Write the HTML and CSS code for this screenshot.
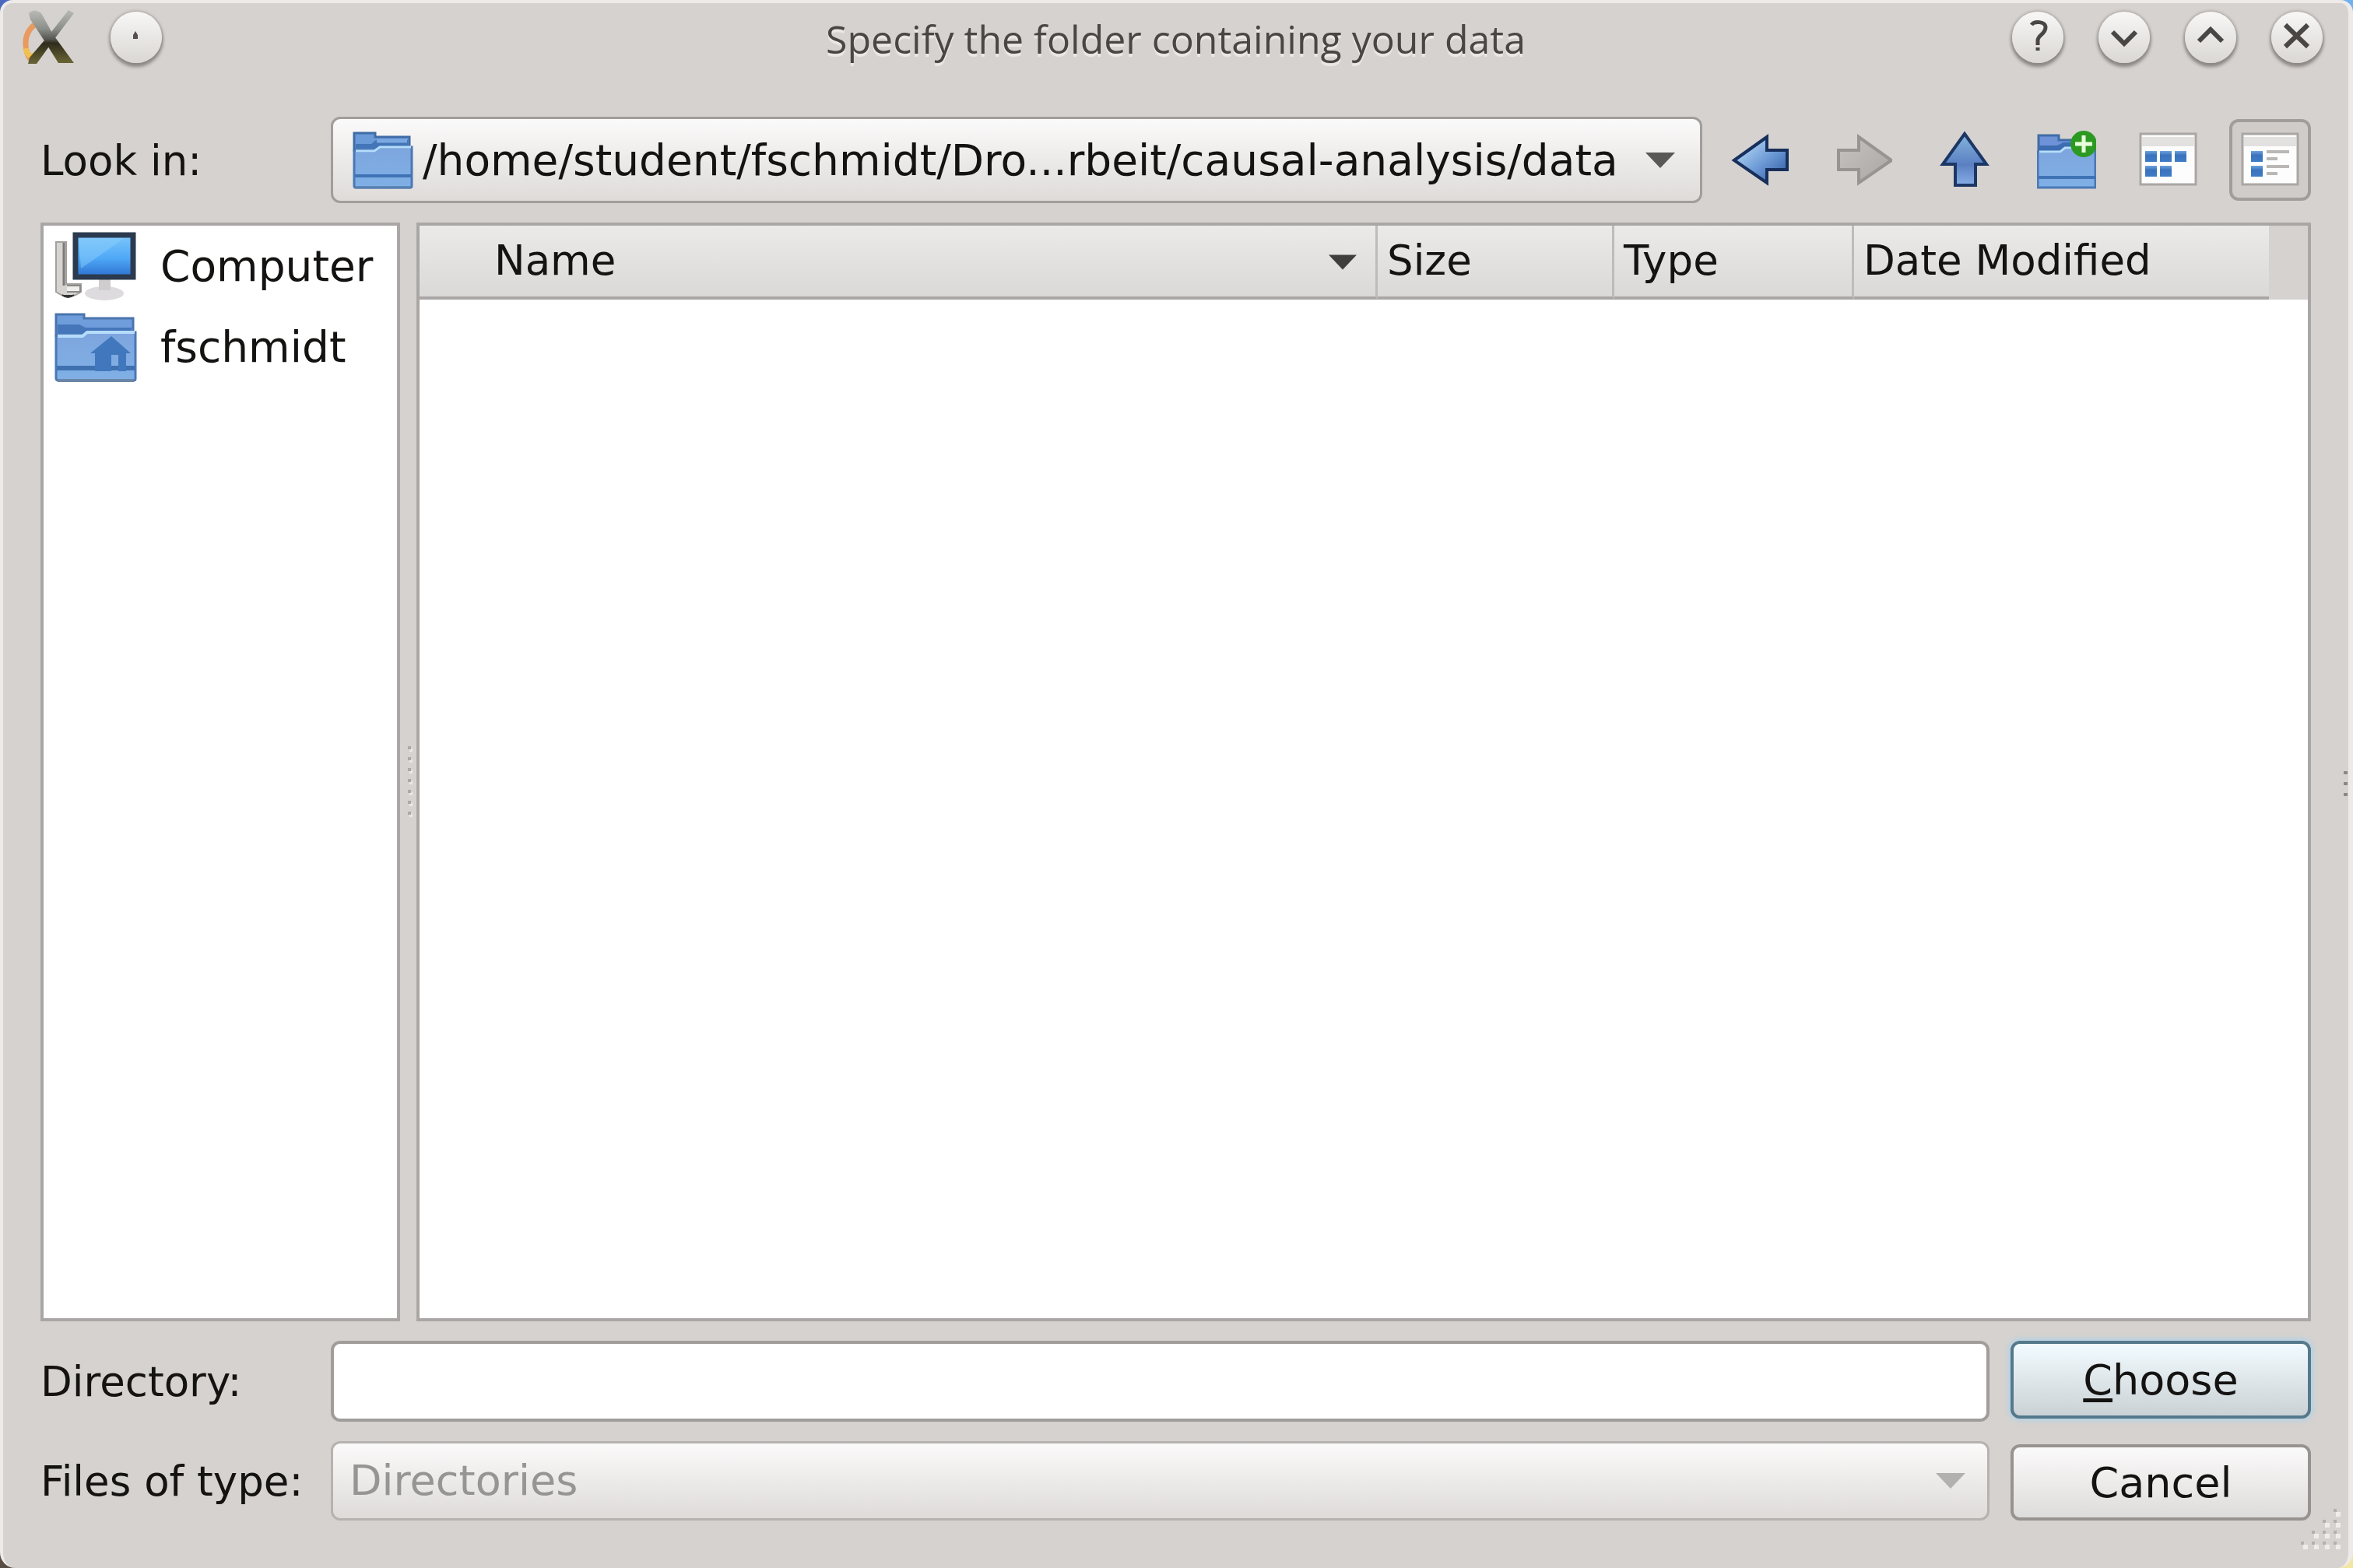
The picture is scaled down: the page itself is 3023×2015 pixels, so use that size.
FILE: index.html
```html
<!DOCTYPE html>
<html lang="en">
<head>
<meta charset="utf-8">
<title>Specify the folder containing your data</title>
<link rel="stylesheet" href="styles.css">
</head>
<body>
<svg class="defs" aria-hidden="true">
  <defs>
    <linearGradient id="blue" x1="0" y1="0" x2="0" y2="1"><stop offset="0" stop-color="#7ea5de"/><stop offset="1" stop-color="#7fb0e6"/></linearGradient>
    <linearGradient id="back" x1="0" y1="0" x2="1" y2="1"><stop offset="0.2" stop-color="#a9cdf0"/><stop offset="0.55" stop-color="#6d9ad6"/><stop offset="0.8" stop-color="#4672b4"/></linearGradient>
    <linearGradient id="fwd" x1="0" y1="0" x2="1" y2="1"><stop offset="0" stop-color="#c6c3c1"/><stop offset="1" stop-color="#a9a6a4"/></linearGradient>
    <linearGradient id="up" x1="0" y1="0" x2="0" y2="1"><stop offset="0" stop-color="#84b4dc"/><stop offset="0.6" stop-color="#5b80c2"/><stop offset="1" stop-color="#86aee6"/></linearGradient>
    <linearGradient id="screen" x1="0" y1="0" x2="0" y2="1"><stop offset="0" stop-color="#7cc6fb"/><stop offset="0.55" stop-color="#50a9f6"/><stop offset="1" stop-color="#2b6fd0"/></linearGradient>
    <linearGradient id="tile" x1="0" y1="0" x2="0" y2="1"><stop offset="0" stop-color="#6fa3dc"/><stop offset="0.4" stop-color="#3a72bd"/><stop offset="1" stop-color="#3f7cc6"/></linearGradient>
    <linearGradient id="metal" x1="0" y1="0" x2="0" y2="1"><stop offset="0" stop-color="#b9bab7"/><stop offset="0.35" stop-color="#8b8e89"/><stop offset="0.55" stop-color="#55544f"/><stop offset="0.62" stop-color="#2f2c1c"/><stop offset="1" stop-color="#6a6535"/></linearGradient>
    <symbol id="folder" viewBox="0 0 78 74">
      <path d="M2 2H29V7H73V24H2Z" fill="#6b9ad8" stroke="#3f6ca6" stroke-width="3"/>
      <path d="M4 16H24L30 11H71V22H4Z" fill="#4375b8"/>
      <path d="M31 12H70" stroke="#7ba8e0" stroke-width="5"/>
      <path d="M2 25H28L35 20H76V70Q76 72 74 72H4Q2 72 2 70Z" fill="url(#blue)" stroke="#4a78b4" stroke-width="3"/>
      <path d="M4 25H28L35 20H75" fill="none" stroke="#b5ddfb" stroke-width="3"/>
      <path d="M3 57H75" stroke="#3f73b5" stroke-width="4"/>
      <path d="M3 72H75" stroke="#5880b0" stroke-width="3"/>
    </symbol>
  </defs>
</svg>

<div class="window">
  <header class="titlebar">
    <div class="title-left">
      <svg class="app-icon" viewBox="0 0 80 80" aria-hidden="true">
        <path d="M20 24Q8 34 9 50Q10 62 15 68" fill="none" stroke="#e89a60" stroke-width="7"/>
        <path d="M9 54Q12 68 22 62" fill="none" stroke="#f0c050" stroke-width="7"/>
        <path d="M64 5L71 9L46 42L23 74H12L14 66L38 38Z" fill="url(#metal)"/>
        <path d="M13 9Q20 2 29 9L44 36L71 73H51L34 46L15 17Z" fill="url(#metal)"/>
      </svg>
      <button class="round" type="button" aria-label="On all desktops"><svg viewBox="0 0 66 66"><path d="M32 25L35 30V35H29V30Z" fill="#55504d"/></svg></button>
    </div>
    <h1 class="title">Specify the folder containing your data</h1>
    <div class="title-right">
      <button class="round" type="button" aria-label="Help"><svg viewBox="0 0 66 66"><path d="M25 17C28 12 43 12 43 20C43 29 33 30 33 37V43M33 46V50" class="glyph"/></svg></button>
      <button class="round" type="button" aria-label="Minimize"><svg viewBox="0 0 66 66"><path d="M18 26L33 41L48 26" class="glyph bold"/></svg></button>
      <button class="round" type="button" aria-label="Maximize"><svg viewBox="0 0 66 66"><path d="M18 38L33 23L48 38" class="glyph bold"/></svg></button>
      <button class="round" type="button" aria-label="Close"><svg viewBox="0 0 66 66"><path d="M18 17L47 45M47 17L18 45" class="glyph bold"/></svg></button>
    </div>
  </header>

  <main class="dialog">
    <div class="lookin">
      <label class="label" for="path">Look in:</label>
      <div class="combo path">
        <svg class="folder-icon"><use href="#folder"/></svg>
        <select id="path"><option>/home/student/fschmidt/Dro...rbeit/causal-analysis/data</option></select>
        <svg class="arrow" viewBox="0 0 38 20"><path d="M0 0H38L19 20Z"/></svg>
      </div>
      <div class="tools">
        <button class="tool" type="button" aria-label="Back"><svg viewBox="0 0 76 76"><path d="M4 38L46 8V25H72V50H46V67Z" fill="url(#back)" stroke="#172f5c" stroke-width="4"/></svg></button>
        <button class="tool" type="button" aria-label="Forward" disabled><svg viewBox="0 0 76 76"><path d="M75 38L33 8V25H7V50H33V67Z" fill="url(#fwd)" stroke="#979492" stroke-width="4"/></svg></button>
        <button class="tool" type="button" aria-label="Parent directory"><svg viewBox="0 0 76 76"><path d="M38 4L66 43H52V70H26V43H10Z" fill="url(#up)" stroke="#1c3766" stroke-width="4"/></svg></button>
        <button class="tool" type="button" aria-label="Create new folder"><svg viewBox="0 0 76 76">
          <path d="M2 6H28V12H72V26H2Z" fill="#6d92d8" stroke="#3f6ca6" stroke-width="3"/><path d="M3 19H26L34 15H72V26H3Z" fill="#3d6cb2"/>
          <path d="M1 27H30L36 22H75V73H1Z" fill="url(#blue)" stroke="#4a78b4" stroke-width="3"/><path d="M3 27H30L36 22H74" fill="none" stroke="#b5ddfb" stroke-width="3"/>
          <path d="M2 60H75" stroke="#3f73b5" stroke-width="4"/><circle cx="60" cy="17" r="17" fill="#2c9a22"/><path d="M60 6V28M49 17H71" stroke="#e9ffdc" stroke-width="5"/></svg></button>
        <button class="tool" type="button" aria-label="List view"><svg viewBox="0 0 76 76"><rect x="2" y="4" width="71" height="65" fill="#fdfdfd" stroke="#a9a6a4" stroke-width="3"/><path d="M4 8H71V20H4Z" fill="#e2e1df"/>
          <g fill="url(#tile)"><rect x="8" y="26" width="15" height="14"/><rect x="27" y="26" width="15" height="14"/><rect x="46" y="26" width="15" height="14"/><rect x="8" y="45" width="15" height="14"/><rect x="27" y="45" width="15" height="14"/></g></svg></button>
        <button class="tool pressed" type="button" aria-label="Detail view" aria-pressed="true"><svg viewBox="0 0 76 76"><rect x="2" y="4" width="71" height="65" fill="#fdfdfd" stroke="#a9a6a4" stroke-width="3"/><path d="M4 8H71V20H4Z" fill="#e2e1df"/>
          <g fill="url(#tile)"><rect x="13" y="26" width="15" height="14"/><rect x="13" y="45" width="15" height="14"/></g><path d="M33 27H62M33 36H47M33 46H62M33 55H47" stroke="#b9b8b7" stroke-width="4"/></svg></button>
      </div>
    </div>

    <div class="panes">
      <ul class="places">
        <li><a href="#computer"><svg viewBox="0 0 106 90" aria-hidden="true">
          <path d="M2 14H15V68H34V78Q18 90 2 78Z" fill="#d5d4d1" stroke="#a3a19e" stroke-width="2"/><path d="M12 15V70" stroke="#7d7b78" stroke-width="3"/><path d="M10 82Q17 88 25 82" fill="#333" stroke="#333" stroke-width="2"/><path d="M16 70H33V78H16" fill="#efeeec" stroke="#8b8986" stroke-width="2"/>
          <ellipse cx="64" cy="80" rx="25" ry="9" fill="#dddbde"/><path d="M57 60H72V76H57Z" fill="#cfcdcd"/>
          <rect x="27" y="5" width="74" height="54" fill="url(#screen)" stroke="#2b3a4e" stroke-width="7"/><path d="M31 9H90L34 48Z" fill="#8fd0fc" opacity="0.45"/></svg>Computer</a></li>
        <li><a href="#home"><svg viewBox="0 0 106 90" aria-hidden="true">
          <path d="M2 3H38V8H101V30H2Z" fill="#6f9ddb" stroke="#4a74ad" stroke-width="3"/><path d="M4 16H32L40 20H99V28H4Z" fill="#4676ba"/>
          <path d="M2 31H36L42 26H104V86Q104 88 101 88H6Q2 88 2 85Z" fill="url(#blue)" stroke="#4a78b4" stroke-width="3"/><path d="M4 31H36L42 26H103" fill="none" stroke="#b5dcfb" stroke-width="4"/>
          <path d="M3 72H103" stroke="#3f70b0" stroke-width="6"/><path d="M73 31L98 53H92V76H82V55H73V76H52V53H46Z" fill="#4178bd"/><path d="M4 88H102" stroke="#6a86a8" stroke-width="4"/></svg>fschmidt</a></li>
      </ul>
      <div class="splitter"><i></i><i></i><i></i><i></i><i></i><i></i><i></i></div>
      <div class="files">
        <table>
          <colgroup><col><col class="c-size"><col class="c-type"><col class="c-date"><col class="c-rest"></colgroup>
          <thead><tr>
            <th scope="col"><span class="sort">Name<svg viewBox="0 0 38 20"><path d="M0 0H38L19 20Z"/></svg></span></th>
            <th scope="col">Size</th><th scope="col">Type</th><th scope="col">Date Modified</th><td></td>
          </tr></thead>
        </table>
      </div>
    </div>

    <form class="form">
      <label class="label" for="dir">Directory:</label>
      <input id="dir" class="field" type="text">
      <button class="btn default" type="button"><u>C</u>hoose</button>
      <label class="label" for="type">Files of type:</label>
      <div class="combo type">
        <select id="type" disabled><option>Directories</option></select>
        <svg class="arrow" viewBox="0 0 38 20"><path d="M0 0H38L19 20Z"/></svg>
      </div>
      <button class="btn" type="button">Cancel</button>
    </form>
  </main>
  <svg class="edge-grip" viewBox="0 0 8 40" aria-hidden="true"><path d="M2 2h5v4h-5zM2 16h5v4h-5zM2 30h5v4h-5z" fill="#8b8886"/></svg>
  <svg class="size-grip" viewBox="0 0 56 56" aria-hidden="true">
    <g fill="#fff" opacity="0.6"><path d="M48 6h6v6h-6zM34 20h6v6h-6zM48 20h6v6h-6zM20 34h6v6h-6zM34 34h6v6h-6zM48 34h6v6h-6zM6 48h6v6h-6zM20 48h6v6h-6zM34 48h6v6h-6zM48 48h6v6h-6z"/></g>
    <g fill="#b3b0ae"><path d="M45 2h4v4h-4zM31 16h4v4h-4zM45 16h4v4h-4zM17 30h4v4h-4zM31 30h4v4h-4zM45 30h4v4h-4zM3 44h4v4h-4zM17 44h4v4h-4zM31 44h4v4h-4zM45 44h4v4h-4z"/></g>
  </svg>
</div>
</body>
</html>
```
FILE: styles.css
```css
* { box-sizing: border-box; }

body {
  margin: 0;
  min-height: 100vh;
  display: flex;
  background:
    linear-gradient(#4a68c0, #4a68c0) left top / 20px 20px no-repeat,
    linear-gradient(#6fb1ee, #6fb1ee) right top / 20px 20px no-repeat,
    linear-gradient(#5a4e44, #5a4e44) left bottom / 24px 24px no-repeat,
    linear-gradient(#f3e6a0, #f3e6a0) right bottom / 20px 20px no-repeat,
    #d6d2cf;
  color: #141312;
  font-family: "DejaVu Sans", sans-serif;
  font-size: 53px;
  line-height: 64px;
}

button, select, input { font: inherit; color: inherit; margin: 0; }
svg { display: block; }
.defs { position: absolute; width: 0; height: 0; }

.window {
  position: relative;
  flex: 1;
  display: flex;
  flex-direction: column;
  background: #d6d2cf;
  border: solid #edeae8;
  border-width: 4px 6px 0 4px;
  border-radius: 16px 16px 20px 20px;
}

/* Title bar */
.titlebar {
  display: grid;
  grid-template-columns: 1fr auto 1fr;
  align-items: center;
  height: 88px;
  padding: 0 20px;
}
.title-left { display: flex; align-items: center; gap: 38px; }
.title-right { display: flex; justify-content: flex-end; gap: 45px; padding-right: 13px; }
.app-icon { width: 80px; height: 80px; }
.title {
  margin: 0;
  padding-top: 3px;
  color: #4a4644;
  font: 400 50px/64px "Open Sans", "Noto Sans", sans-serif;
  text-shadow: 0 4px 1px #ebe8e6;
}
.round {
  width: 66px;
  height: 66px;
  padding: 0;
  border: 0;
  border-radius: 50%;
  background: linear-gradient(#f8f7f6, #dad7d4);
  box-shadow: 0 4px 4px 1px #8b8785, 0 0 3px 2px #b9b5b2;
}
.glyph { fill: none; stroke: #4a4644; stroke-width: 5; }
.glyph.bold { stroke-width: 6; }

/* Dialog body */
.dialog {
  flex: 1;
  display: flex;
  flex-direction: column;
  gap: 25px;
  padding: 58px 48px 61px;
}
.lookin { display: flex; align-items: center; }
.lookin .label { width: 373px; }
.combo {
  display: flex;
  align-items: center;
  border: 3px solid #a09d9b;
  border-radius: 12px;
  background: linear-gradient(#fbfafa, #dedbd9);
}
.combo select {
  flex: 1;
  min-width: 0;
  padding: 0;
  border: 0;
  background: none;
  appearance: none;
  opacity: 1;
}
.path { flex: 1; height: 111px; padding: 0 32px 0 25px; font-size: 55px; }
.path select { margin-left: 12px; }
.folder-icon { width: 78px; height: 74px; }
.arrow { width: 38px; height: 20px; fill: #5a5857; }

.tools { display: flex; gap: 26px; margin-left: 22px; }
.tool {
  display: flex;
  align-items: center;
  justify-content: center;
  width: 105px;
  height: 105px;
  padding: 0;
  border: 4px solid transparent;
  border-radius: 12px;
  background: none;
}
.tool svg { width: 76px; height: 76px; }
.tool.pressed { border-color: #a09d9b; background: #cfccc9; }

/* Panes */
.panes { flex: 1; display: flex; }
.places {
  width: 462px;
  margin: 0;
  padding: 0;
  list-style: none;
  border: 4px solid #a9a6a5;
  background: #fff;
}
.places a {
  display: flex;
  align-items: center;
  gap: 30px;
  height: 104px;
  padding-left: 14px;
  color: inherit;
  font-size: 55px;
  text-decoration: none;
}
.places svg { width: 106px; height: 90px; }
.splitter {
  width: 21px;
  display: flex;
  flex-direction: column;
  align-items: center;
  justify-content: center;
  gap: 10px;
  padding: 22px 0 0 2px;
}
.splitter i { width: 4px; height: 4px; background: #aca9a7; box-shadow: 2px 3px 1px #ebe9e7; }
.files { flex: 1; border: 4px solid #a9a6a5; background: #fff; }

table { width: 100%; table-layout: fixed; border-collapse: separate; border-spacing: 0; }
.c-size { width: 304px; }
.c-type { width: 308px; }
.c-date { width: 533px; }
.c-rest { width: 50px; }
th {
  height: 95px;
  padding: 0 0 2px 12px;
  border-right: 3px solid #bebcba;
  border-bottom: 4px solid #a9a6a5;
  background: linear-gradient(#ebeae9, #dad9d7);
  font-weight: 400;
  text-align: left;
}
th:first-child { padding-left: 96px; }
th:nth-child(4) { border-right: 0; }
td { padding: 0; background: #d6d2cf; }
.sort { display: flex; align-items: center; justify-content: space-between; padding-right: 24px; }
.sort svg { width: 36px; height: 24px; padding-top: 4px; fill: #403e3d; }

/* Name, filter and actions */
.form {
  display: grid;
  grid-template-columns: 346px 1fr 386px;
  gap: 25px 27px;
  align-items: center;
}
.label { padding-top: 2px; white-space: nowrap; }
.field {
  width: 100%;
  height: 104px;
  padding: 0 24px;
  border: 4px solid #a09d9b;
  border-radius: 12px;
  background: #fff;
}
.type { height: 102px; padding: 0 28px 0 21px; border-color: #b5b2b0; font-size: 54px; }
.type select { color: #979594; }
.type .arrow { fill: #b3b1b0; }
.btn {
  align-self: end;
  height: 98px;
  padding: 2px 0 0;
  border: 4px solid #969391;
  border-radius: 12px;
  background: linear-gradient(#fbfafa, #dedcdb);
  font-size: 54px;
}
.btn.default {
  align-self: start;
  height: 100px;
  border-color: #54788c;
  background: linear-gradient(#f2fbff, #cbd2d6);
  box-shadow: 0 0 6px 3px #b5d2e4;
}
.btn u { text-decoration-thickness: 5px; text-underline-offset: 5px; }

/* Resize handles drawn over the window frame */
.edge-grip { position: absolute; right: 0; top: 49%; width: 8px; height: 40px; }
.size-grip { position: absolute; right: 8px; bottom: 22px; width: 56px; height: 56px; }
```
